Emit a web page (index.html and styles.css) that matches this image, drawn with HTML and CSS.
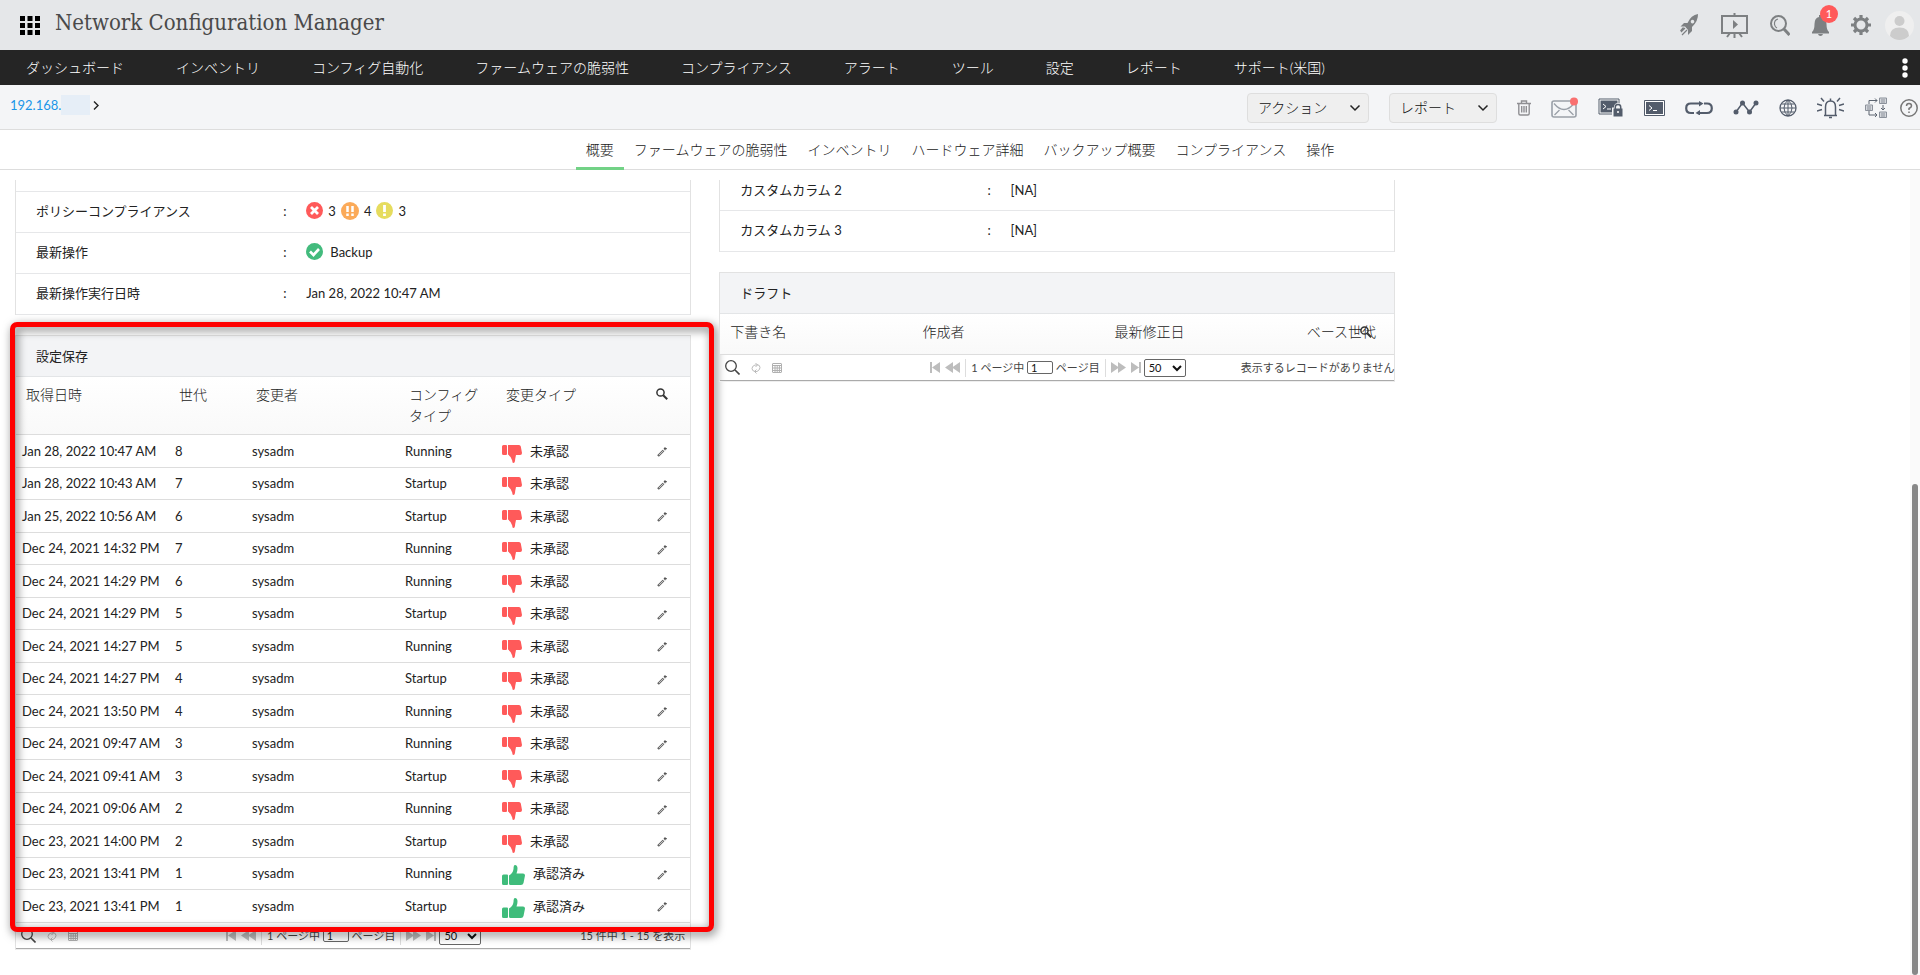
FILE: index.html
```html
<!DOCTYPE html>
<html lang="ja">
<head>
<meta charset="utf-8">
<title>Network Configuration Manager</title>
<meta name="viewport" content="width=device-width, initial-scale=1">
<link rel="stylesheet" href="styles.css">
</head>
<body>
<svg class="defs" aria-hidden="true">
  <symbol id="down" viewBox="0 0 20 18"><path fill="#ff5a5a" d="M1.5 0H4q1 0 1 1v8q0 1-1 1H1.500Q0 10 0 8.500v-7Q0 0 1.500 0zM6 0h11q1.500 0 1.800 1.500L20 8q0 2-1.800 2H14l-.8 4q-.2 4-1.700 4-1.300 0-1.300-2.500Q9.500 12 6 9.500z"/></symbol>
  <symbol id="up" viewBox="0 0 23 20"><path fill="#3fbc7b" d="M1.500 9.500H5q1 0 1 1V19q0 1-1 1H1.500Q0 20 0 18.500V11q0-1.500 1.500-1.500zM7 10.500q4-2.500 4.500-6.500 0-4 1.500-4 2.500 0 2.500 3.500 0 2.500-1 5H21q2 0 2 2L21.500 18q-.5 2-2.500 2H8.500Q7 20 7 18.500z"/></symbol>
  <symbol id="pencil" viewBox="0 0 10 10"><path d="M1 9l5.500-5.500" fill="none" stroke="#666" stroke-width="2.400"/><path d="M2 8l4-4" stroke="#ddd" stroke-width=".8"/><path d="M8 .2v3M6.800 1.700h3" stroke="#555" stroke-width="1.200"/></symbol>
  <symbol id="find" viewBox="0 0 12 12"><circle cx="4.500" cy="4.500" r="3.600" fill="none" stroke="#333" stroke-width="1.500"/><path d="M7.200 7.200l4 4" stroke="#333" stroke-width="2"/></symbol>
  <symbol id="lens" viewBox="0 0 15 15"><circle cx="6" cy="6" r="5.300" fill="none" stroke="#444" stroke-width="1.300"/><path d="M10 10l4.500 4.500" stroke="#444" stroke-width="1.600"/></symbol>
  <symbol id="refresh" viewBox="0 0 10 12"><path d="M4 9.500Q1 9 1 6.500 1 4 4 3h2M4.500 1l2 2-2 2M6 2.500Q9 3 9 5.500 9 8 6 9.500H4M5.500 7.500l-2 2 2 2" fill="none" stroke="#bbb"/></symbol>
  <symbol id="sheet" viewBox="0 0 10 10"><path d="M1 .5h8q.5 0 .5.500v8q0 .5-.5.500H1Q.5 9.500.5 9V1Q.5.5 1 .5zM0 2.500h10M1 5h8M1 7.500h8M3 3v6M5.200 3v6M7.400 3v6" fill="none" stroke="#b0b0b0"/></symbol>
  <symbol id="first" viewBox="0 0 10 11"><path fill="#bdbdbd" d="M0 0h2v11H0zM10 0v11L2 5.500z"/></symbol>
  <symbol id="last" viewBox="0 0 10 11"><path fill="#bdbdbd" d="M8 0h2v11H8zM0 0v11l8-5.500z"/></symbol>
  <symbol id="prev" viewBox="0 0 15 11"><path fill="#bdbdbd" d="M8 0v11L0 5.500zM15 0v11L7 5.500z"/></symbol>
  <symbol id="next" viewBox="0 0 15 11"><path fill="#bdbdbd" d="M0 0v11l8-5.500zM7 0v11l8-5.500z"/></symbol>
  <symbol id="chev" viewBox="0 0 12 8"><path d="M1.500 1.500L6 6l4.500-4.500" fill="none" stroke="#222" stroke-width="1.500"/></symbol>
</svg>

<header class="topbar">
  <button class="ib" aria-label="アプリ"><svg width="20" height="19" viewBox="0 0 20 19"><path d="M0 0h5v5H0zm7.500 0h5v5h-5zM15 0h5v5h-5zM0 7h5v5H0zm7.500 0h5v5h-5zM15 7h5v5h-5zM0 14h5v5H0zm7.500 0h5v5h-5zM15 14h5v5h-5z"/></svg></button>
  <h1 class="brand">Network Configuration Manager</h1>
  <div class="tools">
    <button class="ib" aria-label="クイックスタート"><svg width="20" height="22" viewBox="0 0 20 22"><path fill="#7d8082" fill-rule="evenodd" d="M19 0q.3 7-6 13v4l-4 4v-5l-3-3.500H1.500L5 9h3.500Q12 1 19 0zM13.500 5.800a1.800 1.800 0 1 0 .01 0z"/><path d="M6 14l-4 4M8 16l-5 5M4.500 13.500L1.500 17" stroke="#7d8082" stroke-width="1.200"/></svg></button>
    <button class="ib" aria-label="デモ"><svg width="27" height="25" viewBox="0 0 27 25"><path d="M1 3h25v17H1zM13.500 0v3M13.500 20v5M6 24l3-4M21 24l-3-4" fill="none" stroke="#7d8082" stroke-width="2"/><path fill="#7d8082" d="M12 7v9l5-4.500z"/></svg></button>
    <button class="ib" aria-label="検索"><svg width="20" height="21" viewBox="0 0 20 21"><circle cx="8.500" cy="8.500" r="7.500" fill="none" stroke="#7d8082" stroke-width="2"/><path d="M8 4Q4 5 4.500 9.500 5 12 7 13" fill="none" stroke="#7d8082" stroke-width="1.200"/><path d="M13.500 13.500l6 6.500" stroke="#7d8082" stroke-width="3"/></svg></button>
    <button class="ib bell" aria-label="通知"><svg width="17" height="21" viewBox="0 0 17 21"><path fill="#7d8082" d="M7 0h3v2q4.500 1 4.500 7 0 6 2.500 8v1.500H0V17q2.500-2 2.500-8 0-6 4.500-7zM6 19h5q-.5 2-2.500 2T6 19z"/></svg><span class="badge">1</span></button>
    <button class="ib" aria-label="設定"><svg width="20" height="20" viewBox="0 0 20 20"><circle cx="10" cy="10" r="6" fill="none" stroke="#7d8082" stroke-width="3"/><path d="M10 0v4M10 16v4M0 10h4M16 10h4M3 3l2.500 2.500M14.500 14.500L17 17M17 3l-2.500 2.500M5.500 14.500L3 17" stroke="#7d8082" stroke-width="3.200"/></svg></button>
    <button class="ib avatar" aria-label="ユーザー"><svg width="29" height="29" viewBox="0 0 29 29"><circle cx="14.500" cy="14.500" r="14.500" fill="#efefef"/><circle cx="14.500" cy="10" r="5" fill="#ccc"/><path fill="#ccc" d="M5 25q0-8.500 9.500-8.500T24 25q-4 4-9.500 4T5 25z"/></svg></button>
  </div>
</header>

<nav class="nav">
  <a href="#">ダッシュボード</a><a href="#">インベントリ</a><a href="#">コンフィグ自動化</a><a href="#">ファームウェアの脆弱性</a><a href="#">コンプライアンス</a><a href="#">アラート</a><a href="#">ツール</a><a href="#">設定</a><a href="#">レポート</a><a href="#">サポート(米国)</a>
  <button class="ib more" aria-label="その他"><svg width="6" height="20" viewBox="0 0 6 20"><g fill="#fff"><circle cx="3" cy="3" r="2.700"/><circle cx="3" cy="10" r="2.700"/><circle cx="3" cy="17" r="2.700"/></g></svg></button>
</nav>

<div class="subbar">
  <div class="crumb"><a href="#">192.168.</a><span class="mask"></span><svg width="6" height="9" viewBox="0 0 6 9"><path d="M1 .5l4 4-4 4" fill="none" stroke="#222" stroke-width="1.400"/></svg></div>
  <div class="actions">
    <button class="drop drop-a">アクション<svg width="12" height="8"><use href="#chev"/></svg></button>
    <button class="drop drop-r">レポート<svg width="12" height="8"><use href="#chev"/></svg></button>
    <button class="ib" aria-label="削除"><svg width="14" height="16" viewBox="0 0 14 16"><path d="M0 3.500h14M4.500 3V1h5v2M1.800 3.500v10q0 1.500 1.500 1.500h7.400q1.500 0 1.500-1.500v-10M4.700 6v6.500M7 6v6.500M9.300 6v6.500" fill="none" stroke="#8f8f93" stroke-width="1.400"/></svg></button>
    <button class="ib" aria-label="メール"><svg width="27" height="22" viewBox="0 0 27 22"><rect x="1" y="4" width="24" height="16" rx="2" fill="none" stroke="#9aa0a8" stroke-width="1.600"/><path d="M3 6.500q5 6 10 6t10-6M3.500 18l5-5M22.500 18l-5-5" fill="none" stroke="#9aa0a8" stroke-width="1.300"/><circle cx="23" cy="4.500" r="4" fill="#f97070"/></svg></button>
    <button class="ib" aria-label="SSH"><svg width="26" height="19" viewBox="0 0 26 19"><path d="M1 1h20v15H1z" fill="#fff" stroke="#535c6b"/><path d="M2.500 2.500h17v12h-17z" fill="#535c6b"/><path d="M5 6l3 2.500L5 11M9 11h4" fill="none" stroke="#fff"/><path d="M14 9.500h2V8q1-3 4-3t4 3v1.500h2V19H14z" fill="#f4f5f7"/><path d="M15.500 10.500h9v8h-9z" fill="#535c6b"/><path d="M17.300 11V9q0-2.500 2.700-2.500T22.700 9v2" fill="none" stroke="#535c6b" stroke-width="1.500"/><circle cx="20" cy="14" r="1" fill="#fff"/></svg></button>
    <button class="ib" aria-label="ターミナル"><svg width="21" height="16" viewBox="0 0 21 16"><path d="M.5.500h20v15H.5z" fill="#fff" stroke="#535c6b"/><path d="M2 2h17v12H2z" fill="#535c6b"/><path d="M5 5.500L8 8l-3 2.500M9 10.500h4" fill="none" stroke="#fff"/></svg></button>
    <button class="ib" aria-label="同期"><svg width="28" height="14" viewBox="0 0 28 14"><path d="M9 12H6Q1.200 12 1.200 7.200T6 2.500h9M19 2.500h3q4.800 0 4.800 4.700T22 12h-9" fill="none" stroke="#535c6b" stroke-width="2.200"/><path fill="#535c6b" d="M14 0l4.500 2.500L14 5.500zM15 9l-4.500 3 4.500 2.500z"/></svg></button>
    <button class="ib" aria-label="グラフ"><svg width="26" height="15" viewBox="0 0 26 15"><path d="M3 12L9.500 3l7 9 6.500-9" fill="none" stroke="#535c6b" stroke-width="1.500"/><g fill="#535c6b"><circle cx="3" cy="12" r="2.500"/><circle cx="9.500" cy="3" r="2.500"/><circle cx="16.500" cy="12" r="2.500"/><circle cx="23" cy="3" r="2.500"/></g></svg></button>
    <button class="ib" aria-label="ブラウザ"><svg width="18" height="18" viewBox="0 0 18 18"><path d="M9 1v16M1 9h16M2.500 5h13M2.500 13h13M9 1Q5 4.500 5 9t4 8q4-3.500 4-8T9 1" fill="none" stroke="#535c6b"/><circle cx="9" cy="9" r="8" fill="none" stroke="#535c6b" stroke-width="1.300"/></svg></button>
    <button class="ib" aria-label="アラーム"><svg width="27" height="22" viewBox="0 0 27 22"><path d="M7 18.500h13M8.500 18V10q0-6 5-6t5 6v8M13.500 4V1.500M12 20.500h3M0 7l5 1.500M0 14l5-1.500M27 7l-5 1.500M27 14l-5-1.500M4 1l3 3.500M23 1l-3 3.500" fill="none" stroke="#535c6b" stroke-width="1.500"/></svg></button>
    <button class="ib" aria-label="トポロジー"><svg width="24" height="22" viewBox="0 0 24 22"><path d="M15.500 1h7v5.500h-7zM1.500 8h7v5.500h-7zM15.500 15h7v5.500h-7z" fill="#d5d8dd" stroke="#8b919b"/><path d="M17 3h4M17 5h4M3 10h4M3 12h4M17 17h4M17 19h4" stroke="#8b919b"/><path d="M5 7V3.500h8M11 1.500l2 2-2 2M5 14v4h8M11 16l2 2-2 2M19 8v4M17 11l2 2 2-2" fill="none" stroke="#5d6571"/></svg></button>
    <button class="ib help" aria-label="ヘルプ"><svg width="18" height="18" viewBox="0 0 18 18"><circle cx="9" cy="9" r="8.200" fill="none" stroke="#777" stroke-width="1.500"/><path d="M6.500 7q0-2.500 2.500-2.500T11.500 7Q11.500 8.300 9 9.500V11M9 12.500v1.500" fill="none" stroke="#777" stroke-width="1.500"/></svg></button>
  </div>
</div>

<nav class="tabs">
  <a class="on" href="#">概要</a><a href="#">ファームウェアの脆弱性</a><a href="#">インベントリ</a><a href="#">ハードウェア詳細</a><a href="#">バックアップ概要</a><a href="#">コンプライアンス</a><a href="#">操作</a>
</nav>

<main class="main">
  <div class="col">
    <section class="panel info">
      <div class="row stub"></div>
      <div class="row"><span>ポリシーコンプライアンス</span><span>:</span><span class="val">
        <svg width="17" height="17" viewBox="0 0 17 17"><circle cx="8.500" cy="8.500" r="8.500" fill="#ff5a5a"/><path d="M5 5l7 7M12 5l-7 7" stroke="#fff" stroke-width="2.800"/></svg>3
        <svg width="18" height="18" viewBox="0 0 18 18"><circle cx="9" cy="9" r="9" fill="#fbaa59"/><path d="M6.500 4v6M11.500 4v6M6.500 11.500V14M11.500 11.500V14" stroke="#fff" stroke-width="2.500"/></svg>4
        <svg width="17" height="17" viewBox="0 0 17 17"><circle cx="8.500" cy="8.500" r="8.500" fill="#e6dc5e"/><path d="M8.500 3v7M8.500 11.500V14" stroke="#fff" stroke-width="2.800"/></svg>3</span></div>
      <div class="row"><span>最新操作</span><span>:</span><span class="val"><svg width="17" height="17" viewBox="0 0 17 17"><circle cx="8.500" cy="8.500" r="8.500" fill="#43bb7d"/><path d="M4 8.500l3.500 3.500L13 6" fill="none" stroke="#fff" stroke-width="2.600"/></svg><span class="op">Backup</span></span></div>
      <div class="row"><span>最新操作実行日時</span><span>:</span><span>Jan 28, 2022 10:47 AM</span></div>
    </section>

    <section class="panel saved">
      <h2 class="title">設定保存</h2>
      <table class="grid">
        <colgroup><col class="c-date"><col class="c-gen"><col class="c-user"><col class="c-type"><col><col class="c-edit"></colgroup>
        <thead><tr><th>取得日時</th><th>世代</th><th>変更者</th><th>コンフィグタイプ</th><th>変更タイプ</th><th class="end"><button class="ib" aria-label="列検索"><svg width="12" height="12"><use href="#find"/></svg></button></th></tr></thead>
        <tbody id="rows"></tbody>
      </table>
      <div class="pager">
        <div class="pg-tools"><button class="ib" aria-label="検索"><svg width="15" height="15"><use href="#lens"/></svg></button><button class="ib" aria-label="更新"><svg width="10" height="12"><use href="#refresh"/></svg></button><button class="ib" aria-label="表"><svg width="10" height="10"><use href="#sheet"/></svg></button></div>
        <div class="pg-nav"><button class="ib" aria-label="最初"><svg width="10" height="11"><use href="#first"/></svg></button><button class="ib" aria-label="前"><svg width="15" height="11"><use href="#prev"/></svg></button><i class="sep"></i><label>1 ページ中 <input value="1" aria-label="ページ"> ページ目</label><i class="sep"></i><button class="ib" aria-label="次"><svg width="15" height="11"><use href="#next"/></svg></button><button class="ib" aria-label="最後"><svg width="10" height="11"><use href="#last"/></svg></button><select aria-label="件数"><option>50</option></select></div>
        <span class="pg-msg inset">15 件中 1 - 15 を表示</span>
      </div>
      <div class="marker"></div>
    </section>
  </div>

  <div class="col">
    <section class="panel info">
      <div class="row cut"><span>カスタムカラム 2</span><span>:</span><span>[NA]</span></div>
      <div class="row"><span>カスタムカラム 3</span><span>:</span><span>[NA]</span></div>
    </section>
    <section class="panel">
      <h2 class="title">ドラフト</h2>
      <table class="grid draft">
        <thead><tr><th>下書き名</th><th>作成者</th><th>最新修正日</th><th class="base">ベース世代<button class="ib over" aria-label="列検索"><svg width="12" height="12"><use href="#find"/></svg></button></th></tr></thead>
      </table>
      <div class="pager">
        <div class="pg-tools"><button class="ib" aria-label="検索"><svg width="15" height="15"><use href="#lens"/></svg></button><button class="ib" aria-label="更新"><svg width="10" height="12"><use href="#refresh"/></svg></button><button class="ib" aria-label="表"><svg width="10" height="10"><use href="#sheet"/></svg></button></div>
        <div class="pg-nav"><button class="ib" aria-label="最初"><svg width="10" height="11"><use href="#first"/></svg></button><button class="ib" aria-label="前"><svg width="15" height="11"><use href="#prev"/></svg></button><i class="sep"></i><label>1 ページ中 <input value="1" aria-label="ページ"> ページ目</label><i class="sep"></i><button class="ib" aria-label="次"><svg width="15" height="11"><use href="#next"/></svg></button><button class="ib" aria-label="最後"><svg width="10" height="11"><use href="#last"/></svg></button><select aria-label="件数"><option>50</option></select></div>
        <span class="pg-msg">表示するレコードがありません</span>
      </div>
    </section>
  </div>
</main>
<div class="track"><div class="thumb"></div></div>
<script src="rows.js"></script>
</body>
</html>
```
FILE: styles.css
```css
* { box-sizing: border-box; }
body {
  margin: 0;
  height: 100vh;
  overflow: hidden;
  display: flex;
  flex-direction: column;
  background: #fff;
  color: #222;
  font: 13px/20px Lato, "Noto Sans CJK JP", sans-serif;
}
a { color: inherit; text-decoration: none; }
button, input, select { font: inherit; color: inherit; }
svg { display: block; flex: none; }
.defs { position: absolute; width: 0; height: 0; }
.ib { display: block; flex: none; padding: 0; border: 0; background: none; cursor: pointer; }

.topbar {
  display: flex;
  flex: none;
  align-items: center;
  height: 50px;
  padding: 0 6px 0 20px;
  background: #e5e7e9;
}
.brand {
  margin: 0 0 4px 15px;
  color: #4a4a4a;
  font: 200 22px/30px "Roboto Slab", "DejaVu Serif Condensed", "DejaVu Serif", serif;
}
.tools { display: flex; align-items: center; gap: 22px; margin-left: auto; }
.avatar { margin-left: -8px; }
.bell { position: relative; }
.badge {
  position: absolute;
  left: 8px;
  top: -10px;
  width: 18px;
  height: 18px;
  border-radius: 50%;
  background: #ff5a5a;
  color: #fff;
  font-size: 11px;
  line-height: 18px;
  text-align: center;
}

.nav {
  display: flex;
  flex: none;
  align-items: center;
  height: 35px;
  background: #252525;
  color: #fff;
  font-size: 14px;
  font-weight: 300;
}
.nav a { padding: 0 26px; }
.more { margin: 0 12px 0 auto; }

.subbar {
  display: flex;
  flex: none;
  justify-content: space-between;
  height: 45px;
  padding: 0 2px 0 10px;
  border-bottom: 1px solid #ddd;
  background: #f4f5f7;
}
.crumb { display: flex; align-items: center; height: 40px; color: #1b96e8; font-size: 13px; }
.mask { width: 29px; height: 20px; margin-right: 3px; background: #e6eef7; }
.actions { display: flex; align-items: center; gap: 20px; padding-top: 1px; }
.drop {
  display: flex;
  align-items: center;
  justify-content: space-between;
  height: 30px;
  padding: 0 7px 0 10px;
  border: 1px solid #dedede;
  border-radius: 4px;
  background: #efefef;
  color: #111;
  font-size: 14px;
  font-weight: 300;
}
.drop-a { width: 122px; }
.drop-r { width: 108px; }
.help { margin-left: -8px; }

.tabs {
  display: flex;
  flex: none;
  justify-content: center;
  height: 40px;
  border-bottom: 1px solid #ddd;
  font-size: 14px;
  font-weight: 300;
  line-height: 40px;
}
.tabs a { height: 40px; padding: 0 10px; }
.tabs .on { border-bottom: 3px solid #72d286; }

.main {
  display: grid;
  flex: 1;
  grid-template-columns: 1fr 1fr;
  align-items: start;
  gap: 28px;
  width: 71.9%;
  margin: 10px 0 0 15px;
}
.col { display: flex; flex-direction: column; gap: 20px; }
.panel { position: relative; border: 1px solid #e2e2e2; border-bottom-color: #eee; }
.info { border-top: 0; border-bottom: 0; }
.row {
  display: grid;
  grid-template-columns: 39% 23px 1fr;
  align-items: center;
  height: 41px;
  padding: 0 20px 3px;
  border-bottom: 1px solid #e6e7e9;
}
.stub { height: 12px; }
.cut { height: 31px; padding-bottom: 14px; }
.val { display: flex; align-items: center; gap: 5px; }
.op { margin-left: 2px; }
.title {
  margin: 0;
  padding: 10px 20px;
  border-bottom: 1px solid #e3e5e7;
  background: #f3f4f6;
  font-size: 13px;
  font-weight: 400;
  line-height: 20px;
}
.grid { width: 100%; border-collapse: separate; border-spacing: 0; table-layout: fixed; }
.grid th {
  padding: 7px 10px 8px;
  border-bottom: 1px solid #ddd;
  background: linear-gradient(#fff, #f9f9f9);
  font-size: 14px;
  font-weight: 300;
  line-height: 21px;
  text-align: left;
  vertical-align: top;
}
.grid th.end { padding: 11px 0 0 6px; }
.grid td { height: 32px; padding: 0 6px 1px; border-bottom: 1px solid #ddd; }
.grid td:last-child { padding: 2px 0 0 7px; }
.grid tr:nth-child(odd) td { height: 33px; }
.c-date { width: 153px; }
.c-gen { width: 77px; }
.c-user { width: 153px; }
.c-type { width: 97px; }
.c-edit { width: 40px; }
.verdict { display: flex; align-items: center; gap: 8px; height: 24px; }
.verdict svg { align-self: flex-end; }
.grid.draft th { width: 28.5%; padding-bottom: 12px; white-space: nowrap; }
.grid.draft th.base { position: relative; width: 14.5%; }
.over { position: absolute; right: 22px; top: 12px; }

.pager {
  display: grid;
  grid-template-columns: 210px auto 1fr;
  align-items: center;
  height: 26px;
  border-bottom: 1px solid #aaa;
  color: #444;
  font-size: 11px;
  white-space: nowrap;
}
.pg-tools { display: flex; align-items: center; gap: 11px; padding-left: 5px; }
.pg-nav { display: flex; align-items: center; gap: 5px; }
.pg-nav select { width: 42px; height: 18px; margin-left: -2px; padding: 0; border: 1px solid #666; border-radius: 2px; background: #fff; color: #111; }
.pg-nav input { width: 26px; height: 13px; padding: 0 3px; border: 1px solid #666; border-radius: 2px; color: #111; line-height: 11px; }
.sep { width: 1px; height: 18px; background: #ddd; }
.pg-msg { text-align: right; }
.inset { padding-right: 5px; }

.marker {
  position: absolute;
  inset: -14px -24px 17px -6px;
  border: 5px solid #f00;
  border-radius: 7px;
  filter: drop-shadow(2px 3px 5px rgba(0, 0, 0, .6));
  pointer-events: none;
}
.track {
  position: absolute;
  right: 0;
  top: 170px;
  bottom: 0;
  display: flex;
  align-items: flex-end;
  width: 10px;
  padding: 0 2px;
  background: #fafafa;
}
.thumb { flex: 1; height: 61%; border-radius: 3px; background: #888; }
```
FILE: rows.js
```js
const rows = [
  ["Jan 28, 2022 10:47 AM", 8, "Running"],
  ["Jan 28, 2022 10:43 AM", 7, "Startup"],
  ["Jan 25, 2022 10:56 AM", 6, "Startup"],
  ["Dec 24, 2021 14:32 PM", 7, "Running"],
  ["Dec 24, 2021 14:29 PM", 6, "Running"],
  ["Dec 24, 2021 14:29 PM", 5, "Startup"],
  ["Dec 24, 2021 14:27 PM", 5, "Running"],
  ["Dec 24, 2021 14:27 PM", 4, "Startup"],
  ["Dec 24, 2021 13:50 PM", 4, "Running"],
  ["Dec 24, 2021 09:47 AM", 3, "Running"],
  ["Dec 24, 2021 09:41 AM", 3, "Startup"],
  ["Dec 24, 2021 09:06 AM", 2, "Running"],
  ["Dec 23, 2021 14:00 PM", 2, "Startup"],
  ["Dec 23, 2021 13:41 PM", 1, "Running", true],
  ["Dec 23, 2021 13:41 PM", 1, "Startup", true]
];
document.getElementById("rows").innerHTML = rows.map(([date, gen, type, ok]) => `
  <tr><td>${date}</td><td>${gen}</td><td>sysadm</td><td>${type}</td>
  <td><div class="verdict">${ok
    ? '<svg width="23" height="20"><use href="#up"/></svg>承認済み'
    : '<svg width="20" height="18"><use href="#down"/></svg>未承認'}</div></td>
  <td><button class="ib" aria-label="編集"><svg width="10" height="10"><use href="#pencil"/></svg></button></td></tr>`).join("");
```
